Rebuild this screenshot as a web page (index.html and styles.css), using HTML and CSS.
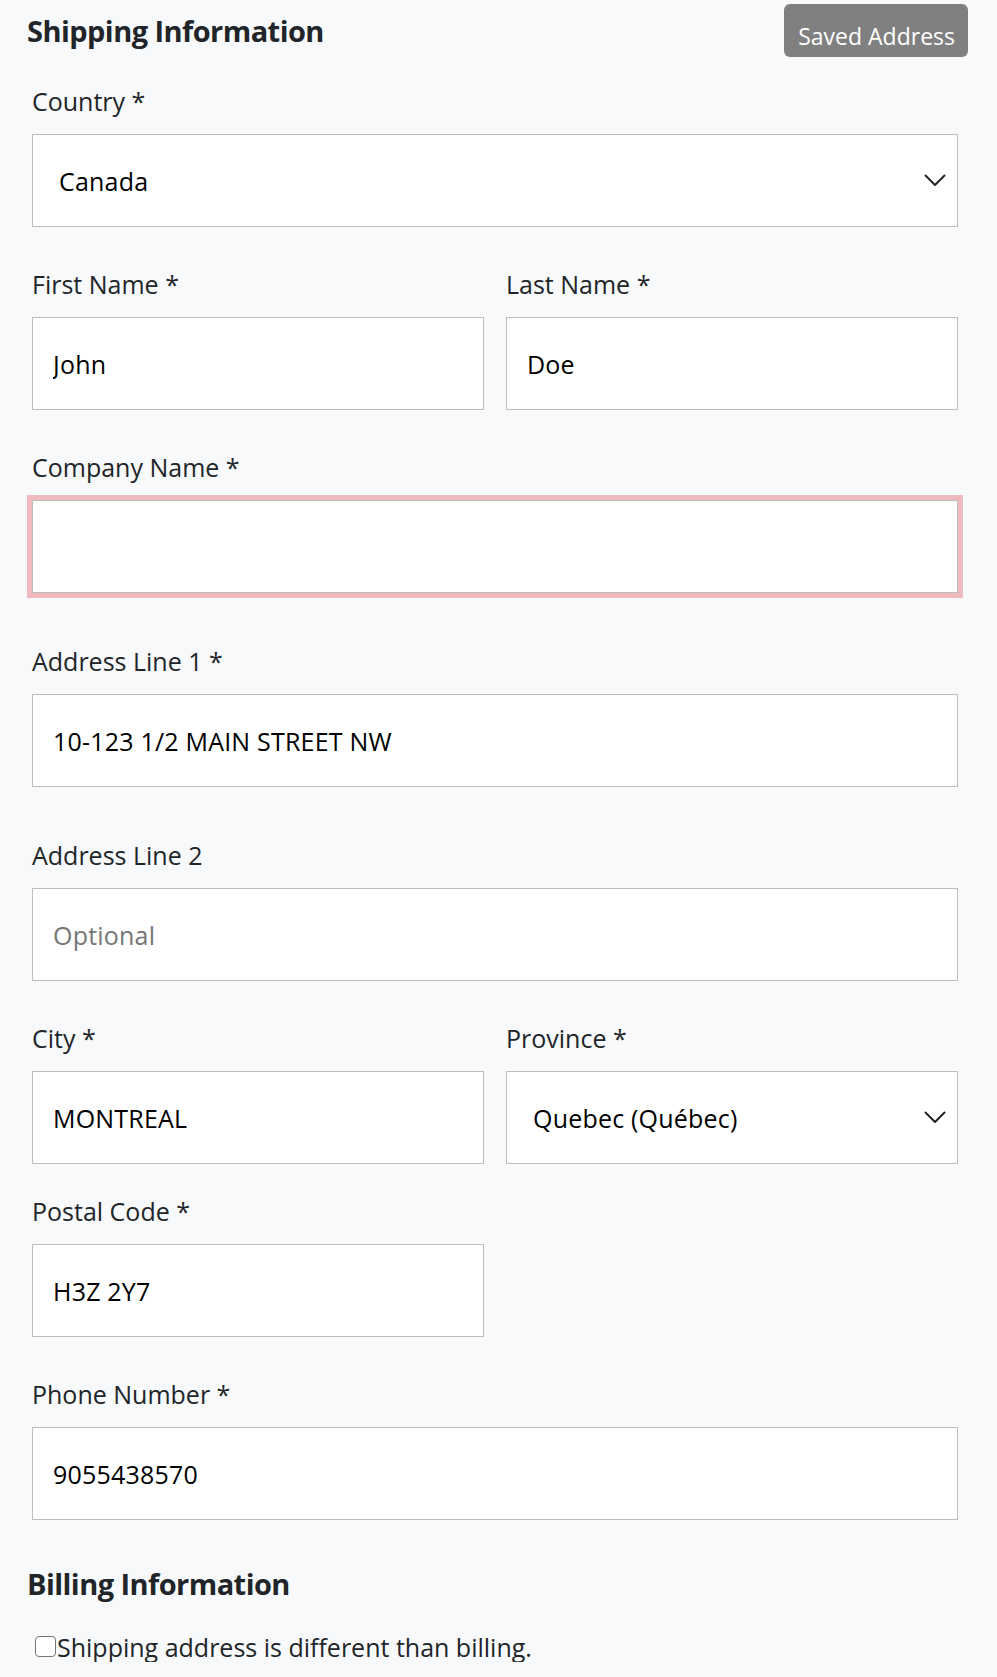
FILE: index.html
```html
<!DOCTYPE html>
<html lang="en">
<head>
<meta charset="utf-8">
<title>Shipping Information</title>
<link rel="stylesheet" href="styles.css">
</head>
<body>
<div class="page">
  <div class="head-row">
    <h2 class="section-title">Shipping Information</h2>
    <button type="button" class="btn-saved">Saved Address</button>
  </div>

  <div class="fields">
    <div class="field">
      <label class="field-label">Country *</label>
      <div class="select-wrap">
        <select class="control select"><option>Canada</option></select>
        <svg class="chevron" width="22" height="13" viewBox="0 0 22 13"><polyline points="1.5,1.5 11,11 20.5,1.5" fill="none" stroke="#212529" stroke-width="2" stroke-linecap="round" stroke-linejoin="round"/></svg>
      </div>
    </div>

    <div class="row2">
      <div class="field">
        <label class="field-label">First Name *</label>
        <input class="control" type="text" value="John">
      </div>
      <div class="field">
        <label class="field-label">Last Name *</label>
        <input class="control" type="text" value="Doe">
      </div>
    </div>

    <div class="field field-wide">
      <label class="field-label">Company Name *</label>
      <input class="control control-invalid" type="text" value="">
    </div>

    <div class="field field-wide">
      <label class="field-label">Address Line 1 *</label>
      <input class="control" type="text" value="10-123 1/2 MAIN STREET NW">
    </div>

    <div class="field">
      <label class="field-label">Address Line 2</label>
      <input class="control" type="text" placeholder="Optional">
    </div>

    <div class="row2 row-tight">
      <div class="field">
        <label class="field-label">City *</label>
        <input class="control" type="text" value="MONTREAL">
      </div>
      <div class="field">
        <label class="field-label">Province *</label>
        <div class="select-wrap">
          <select class="control select"><option>Quebec (Québec)</option></select>
          <svg class="chevron" width="22" height="13" viewBox="0 0 22 13"><polyline points="1.5,1.5 11,11 20.5,1.5" fill="none" stroke="#212529" stroke-width="2" stroke-linecap="round" stroke-linejoin="round"/></svg>
        </div>
      </div>
    </div>

    <div class="row2">
      <div class="field">
        <label class="field-label">Postal Code *</label>
        <input class="control" type="text" value="H3Z 2Y7">
      </div>
      <div></div>
    </div>

    <div class="field field-last">
      <label class="field-label">Phone Number *</label>
      <input class="control" type="text" value="9055438570">
    </div>
  </div>

  <h2 class="section-title billing-title">Billing Information</h2>
  <label class="check-row"><input class="check" type="checkbox">Shipping address is different than billing.</label>
</div>
</body>
</html>
```

FILE: styles.css
```css
* { box-sizing: border-box; }

html, body {
  margin: 0;
  padding: 0;
  background: #f8f9fa;
}

body {
  font-family: "Open Sans", "Noto Sans", sans-serif;
  color: #212529;
}

.page {
  padding: 0 29px 0 27px;
}

.head-row {
  display: flex;
  justify-content: space-between;
  align-items: flex-start;
  padding-top: 4px;
}

.section-title {
  margin: 10px 0 0 0;
  font-size: 29px;
  line-height: 34.8px;
  font-weight: 700;
  letter-spacing: -0.55px;
  color: #212529;
}

.btn-saved {
  height: 53px;
  padding: 11px 13px 0 14px;
  border: 0;
  border-radius: 6px;
  background: #808080;
  color: #ffffff;
  font-family: "Open Sans", "Noto Sans", sans-serif;
  font-size: 23px;
  line-height: 1;
}

.fields {
  margin: 29px 10px 0 5px;
}

.field {
  margin-bottom: 42px;
}

.field-wide {
  margin-bottom: 53px;
}

.row-tight .field {
  margin-bottom: 32px;
}

.field-last {
  margin-bottom: 0;
}

.row2 {
  display: grid;
  grid-template-columns: 1fr 1fr;
  column-gap: 22px;
}

.field-label {
  display: block;
  font-size: 25px;
  line-height: 30px;
  margin-bottom: 18px;
  color: #212529;
}

.control {
  display: block;
  width: 100%;
  height: 93px;
  margin: 0;
  padding: 0 20px;
  border: 1px solid #bdbdbd;
  border-radius: 0;
  background: #ffffff;
  font-family: "Open Sans", "Noto Sans", sans-serif;
  font-size: 25px;
  letter-spacing: 0.2px;
  color: #000000;
  outline: none;
}

.control::placeholder {
  color: #767676;
  opacity: 1;
}

.control-invalid {
  box-shadow: 0 0 0 5px #f0b9bd;
}

.select-wrap {
  position: relative;
}

.select {
  appearance: none;
  -webkit-appearance: none;
  padding-left: 26px;
  padding-right: 50px;
}

.chevron {
  position: absolute;
  right: 12px;
  top: 40px;
  pointer-events: none;
}

.billing-title {
  margin-top: 47px;
}

.check-row {
  display: flex;
  align-items: center;
  margin-top: 30px;
  padding-left: 8px;
  font-size: 25px;
  line-height: 30px;
  color: #212529;
}

.check {
  appearance: none;
  -webkit-appearance: none;
  width: 21px;
  height: 21px;
  margin: 0 1px 0 0;
  border: 1.5px solid #767676;
  border-radius: 4px;
  background: #ffffff;
  flex: none;
}
```
